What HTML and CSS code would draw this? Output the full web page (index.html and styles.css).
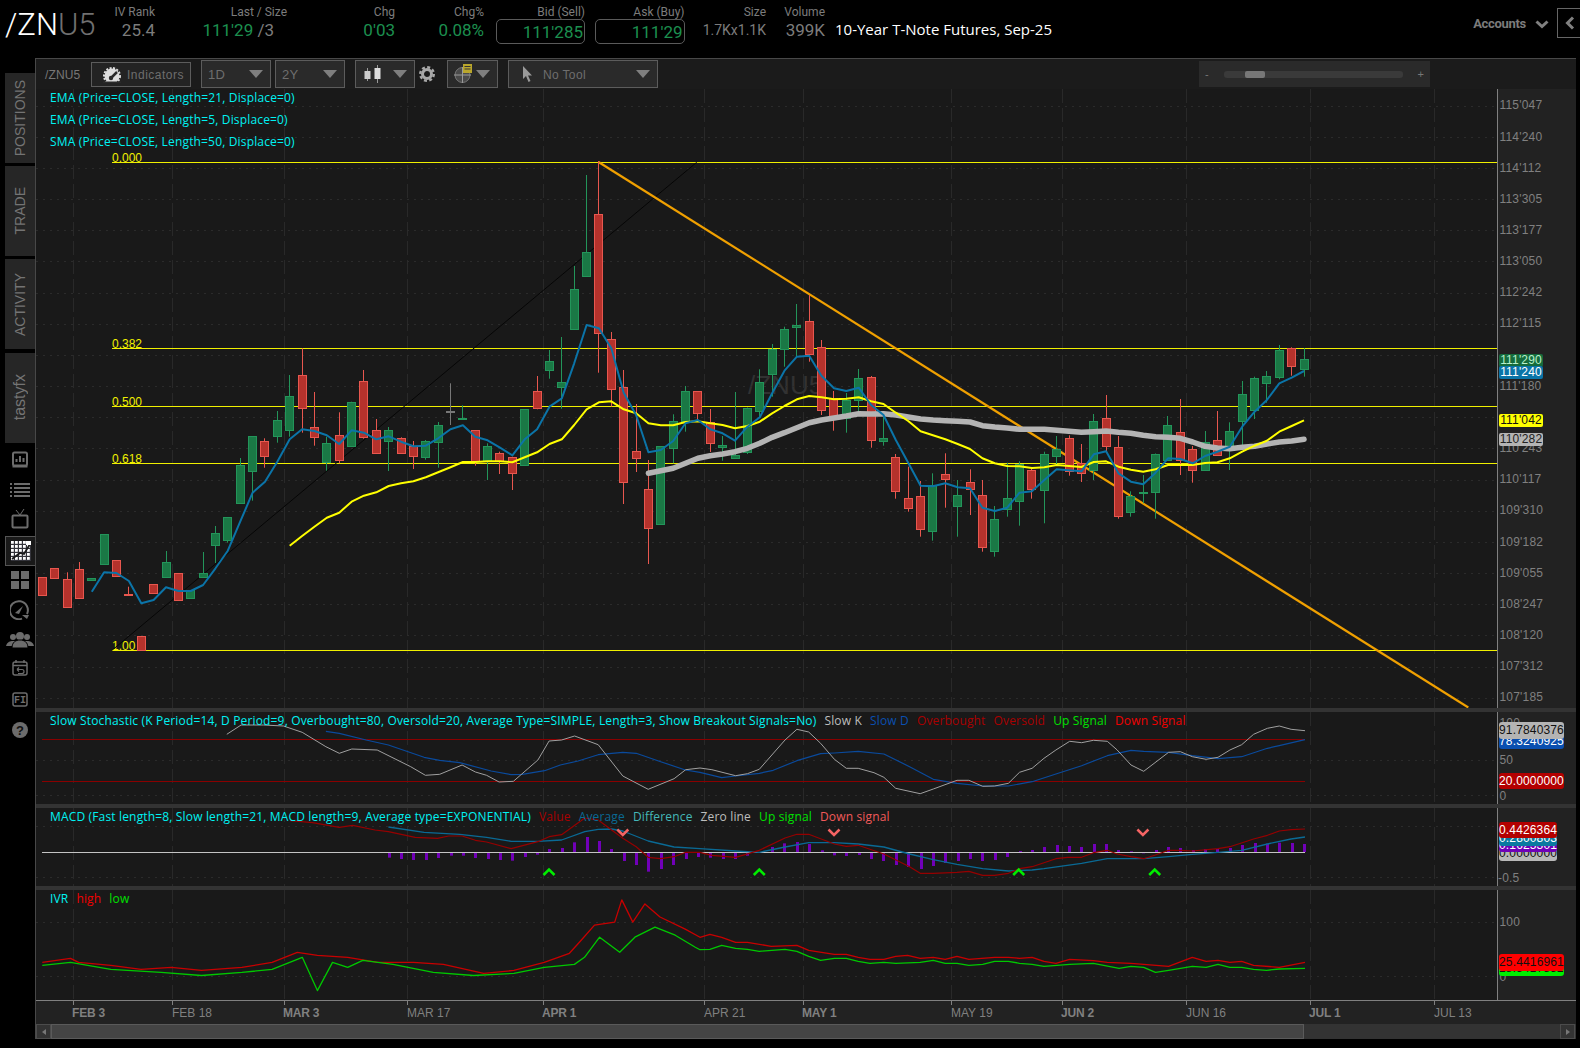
FILE: index.html
```html
<!DOCTYPE html>
<html lang="en">
<head>
<meta charset="utf-8">
<title>/ZNU5 chart</title>
<link rel="stylesheet" href="styles.css">
</head>
<body>
<div class="app">
  <header class="topbar">
    <div class="symbol">/ZN<span class="symbol-dim">U5</span></div>
    <div class="field f-iv"><div class="lbl">IV Rank</div><div class="val">25.4</div></div>
    <div class="field f-last"><div class="lbl">Last / Size</div><div class="val val-inset"><span class="up">111'29</span> /3</div></div>
    <div class="field f-chg"><div class="lbl">Chg</div><div class="val up">0'03</div></div>
    <div class="field f-pct"><div class="lbl">Chg%</div><div class="val up">0.08%</div></div>
    <div class="field f-bid"><div class="lbl">Bid (Sell)</div><div class="val up boxed">111'285</div></div>
    <div class="field f-ask"><div class="lbl">Ask (Buy)</div><div class="val up boxed">111'29</div></div>
    <div class="field f-size"><div class="lbl">Size</div><div class="val small">1.7Kx1.1K</div></div>
    <div class="field f-vol"><div class="lbl">Volume</div><div class="val">399K</div></div>
    <div class="title">10-Year T-Note Futures, Sep-25</div>
    <div class="accounts">Accounts
      <svg class="acc-chev" width="14" height="9" viewBox="0 0 14 9"><path d="M1.5 1.5 7 6.5l5.5-5" fill="none" stroke="#808080" stroke-width="3"/></svg>
    </div>
    <button class="collapse" type="button" aria-label="Collapse">
      <svg width="10" height="14" viewBox="0 0 10 14"><path d="M8 1.5 2.5 7 8 12.5" fill="none" stroke="#808080" stroke-width="3"/></svg>
    </button>
  </header>

  <div class="main">
    <aside class="sidebar">
      <div class="tabs">
        <div class="tab"><span>POSITIONS</span></div>
        <div class="tab"><span>TRADE</span></div>
        <div class="tab"><span>ACTIVITY</span></div>
        <div class="tab tab-tasty"><span>tastyfx</span></div>
      </div>
      <nav class="tools">
        <div class="tool"><svg width="18" height="18" viewBox="0 0 18 18"><rect x="2" y="1.5" width="14" height="13" rx="1.5" fill="none" stroke="#6c6c6c" stroke-width="2"/><path d="M1.5 15.5h15" stroke="#6c6c6c" stroke-width="2"/><path d="M5.5 11V8M9 11V5M12.5 11V7" stroke="#6c6c6c" stroke-width="2"/></svg></div>
        <div class="tool"><svg width="20" height="16" viewBox="0 0 20 16"><path d="M0 2h2M4 2h16M0 6h2M4 6h16M0 10h2M4 10h16M0 14h2M4 14h16" stroke="#6c6c6c" stroke-width="2"/></svg></div>
        <div class="tool tool-tv"><svg width="18" height="20" viewBox="0 0 18 20"><rect x="1.5" y="6.5" width="15" height="12" rx="1" fill="none" stroke="#6c6c6c" stroke-width="2"/><path d="M5 1l4 5 4-6" fill="none" stroke="#6c6c6c"/></svg></div>
        <div class="tool tool-on"><svg width="20" height="20" viewBox="0 0 20 20"><defs><pattern id="cell" width="4" height="4" patternUnits="userSpaceOnUse"><rect width="4" height="4" fill="#fff"/><rect x="2.800" y="0" width="1.200" height="4" fill="#33333a"/><rect x="0" y="2.800" width="4" height="1.200" fill="#33333a"/></pattern></defs><rect width="20" height="20" fill="url(#cell)"/><path d="M1 18 9 12l4 1 6-10" fill="none" stroke="#1a1a1a" stroke-width="1.800"/><rect x="15" y="0" width="5" height="4" fill="#fff"/></svg></div>
        <div class="tool"><svg width="18" height="18" viewBox="0 0 18 18"><path d="M0 0h8v8H0zM10 0h8v8h-8zM0 10h8v8H0zM10 10h8v8h-8z" fill="#6c6c6c"/></svg></div>
        <div class="tool"><svg width="20" height="20" viewBox="0 0 20 20"><path d="M17 14A9 9 0 1 0 12 18.6" fill="none" stroke="#6c6c6c" stroke-width="2"/><path d="M5 13 13 6l-4 8z" fill="#6c6c6c"/><path d="M12 15h7l-2 4z" fill="#6c6c6c"/></svg></div>
        <div class="tool"><svg width="28" height="17" viewBox="0 0 28 17"><g fill="#6c6c6c"><circle cx="7" cy="6" r="3"/><path d="M0 15c1-4 4-5 7-5s5 2 5 5z"/><circle cx="21" cy="6" r="3"/><path d="M28 15c-1-4-4-5-7-5s-5 2-5 5z"/><circle cx="14" cy="5" r="4"/><path d="M6 17c0-6 4-8 8-8s8 2 8 8z" stroke="#000"/></g></svg></div>
        <div class="tool tool-cal"><svg width="16" height="16" viewBox="0 0 16 16"><rect x="1" y="2" width="14" height="13" rx="2" fill="none" stroke="#6c6c6c" stroke-width="1.5"/><path d="M1 5.5h14M4 0v3M12 0v3" stroke="#6c6c6c" stroke-width="1.5"/><path d="M5 9.5h5a2 2 0 0 1 0 4H6M5 9.5l2-2M5 9.5l2 2" fill="none" stroke="#6c6c6c" stroke-width="1.2"/></svg></div>
        <div class="tool"><svg width="16" height="15" viewBox="0 0 16 15"><rect x="1" y="1" width="14" height="13" rx="2" fill="none" stroke="#6c6c6c" stroke-width="1.5"/><text x="8" y="11" class="fi">FI</text></svg></div>
        <div class="tool"><svg width="16" height="16" viewBox="0 0 16 16"><circle cx="8" cy="8" r="8" fill="#6c6c6c"/><text x="8" y="12.5" class="qm">?</text></svg></div>
      </nav>
    </aside>

    <section class="panel">
      <div class="toolbar">
        <span class="tb-symbol">/ZNU5</span>
        <button class="btn btn-ind" type="button">
          <svg width="18" height="16" viewBox="0 0 18 16"><circle cx="9" cy="9" r="7.5" fill="#ddd"/><circle cx="9" cy="9" r="8" fill="none" stroke="#ddd" stroke-width="2" stroke-dasharray="2 1.5"/><path d="M0 14.5h18V17H0z" fill="#2a2a2a"/><path d="M8 11 14 5" stroke="#2a2a2a" stroke-width="2.5"/><circle cx="8" cy="11" r="2.2" fill="#2a2a2a"/></svg>
          <span>Indicators</span>
        </button>
        <button class="btn btn-1d" type="button"><span>1D</span><i class="tri"></i></button>
        <button class="btn btn-2y" type="button"><span>2Y</span><i class="tri"></i></button>
        <button class="btn btn-style" type="button">
          <svg width="20" height="18" viewBox="0 0 20 18"><path d="M4.5 3v13M14.500 0v18" stroke="#999"/><rect x="1.500" y="6" width="6" height="8" fill="#ccc"/><rect x="11.500" y="3" width="6" height="11" fill="#ddd"/></svg>
          <i class="tri"></i>
        </button>
        <svg class="gear" width="16" height="16" viewBox="0 0 16 16"><circle cx="8" cy="8" r="4.500" fill="none" stroke="#a8a8a8" stroke-width="3"/><circle cx="8" cy="8" r="6.800" fill="none" stroke="#a8a8a8" stroke-width="2.400" stroke-dasharray="3 2.340"/></svg>
        <button class="btn btn-draw" type="button">
          <svg width="19" height="20" viewBox="0 0 19 20"><circle cx="8.500" cy="11" r="7.500" fill="#4a4a4a" stroke="#777"/><path d="M0 11h17M8.500 3v16" stroke="#999"/><rect x="9" y="0" width="9" height="9" fill="#b9a62c"/><path d="M10.500 2.500h6M10.500 5h6" stroke="#333"/></svg>
          <i class="tri"></i>
        </button>
        <button class="btn btn-tool" type="button">
          <svg width="11" height="16" viewBox="0 0 11 16"><path d="M1 0v13l3-3 2.500 6 2-1-2.500-5.500H10z" fill="#999"/></svg>
          <span>No Tool</span><i class="tri"></i>
        </button>
        <div class="zoombar">
          <span class="z-minus">-</span>
          <div class="z-track"><div class="z-thumb"></div></div>
          <span class="z-plus">+</span>
        </div>
      </div>

      <div class="pane pane-main">
        <div class="plot">
          <div class="watermark">/ZNU5</div>
          <svg id="s-main" class="chart"></svg>
          <div class="legend-stack">
            <div class="legend">EMA (Price=CLOSE, Length=21, Displace=0)</div>
            <div class="legend">EMA (Price=CLOSE, Length=5, Displace=0)</div>
            <div class="legend">SMA (Price=CLOSE, Length=50, Displace=0)</div>
          </div>
        </div>
        <div class="axis">
          <div class="ticks">
            <div class="tick">115'047</div><div class="tick">114'240</div><div class="tick">114'112</div><div class="tick">113'305</div>
            <div class="tick">113'177</div><div class="tick">113'050</div><div class="tick">112'242</div><div class="tick">112'115</div>
            <div class="tick"></div><div class="tick">111'180</div><div class="tick"></div><div class="tick">110'243</div>
            <div class="tick">110'117</div><div class="tick">109'310</div><div class="tick">109'182</div><div class="tick">109'055</div>
            <div class="tick">108'247</div><div class="tick">108'120</div><div class="tick">107'312</div><div class="tick">107'185</div>
          </div>
          <span class="tag t-last">111'290</span>
          <span class="tag t-ema5">111'240</span>
          <span class="tag t-ema21">111'042</span>
          <span class="tag t-sma">110'282</span>
        </div>
      </div>
      <div class="sep"></div>

      <div class="pane pane-stoch">
        <div class="plot">
          <svg id="s-stoch" class="chart"></svg>
          <div class="legend legend-row">
            <span>Slow Stochastic (K Period=14, D Period=9, Overbought=80, Oversold=20, Average Type=SIMPLE, Length=3, Show Breakout Signals=No)</span>
            <span class="c-k">Slow K</span><span class="c-d">Slow D</span><span class="c-ob">Overbought</span><span class="c-ob">Oversold</span><span class="c-up">Up Signal</span><span class="c-dn">Down Signal</span>
          </div>
        </div>
        <div class="axis">
          <span class="mini m-s100">100</span><span class="mini m-s50">50</span><span class="mini m-s0">0</span>
          <span class="tag wide t-d">78.3240925</span>
          <span class="tag wide t-k">91.7840376</span>
          <span class="tag wide t-os">20.0000000</span>
        </div>
      </div>
      <div class="sep"></div>

      <div class="pane pane-macd">
        <div class="plot">
          <svg id="s-macd" class="chart"></svg>
          <div class="legend legend-row">
            <span>MACD (Fast length=8, Slow length=21, MACD length=9, Average type=EXPONENTIAL)</span>
            <span class="c-ob">Value</span><span class="c-avg">Average</span><span class="c-diff">Difference</span><span class="c-k">Zero line</span><span class="c-up">Up signal</span><span class="c-pink">Down signal</span>
          </div>
        </div>
        <div class="axis">
          <span class="mini m-mn">-0.5</span>
          <span class="tag t-zero">0.0000000</span>
          <span class="tag t-diff">0.1625301</span>
          <span class="tag t-avg">0.2800803</span>
          <span class="tag t-val">0.4426364</span>
        </div>
      </div>
      <div class="sep"></div>

      <div class="pane pane-ivr">
        <div class="plot">
          <svg id="s-ivr" class="chart"></svg>
          <div class="legend legend-row">
            <span>IVR</span><span class="c-dn">high</span><span class="c-up">low</span>
          </div>
        </div>
        <div class="axis">
          <span class="mini m-i100">100</span><span class="mini m-i0">0</span>
          <span class="tag wide t-low">18.5417852</span>
          <span class="tag wide t-high">25.4416961</span>
        </div>
      </div>

      <div class="timeaxis" id="timeaxis"></div>
      <div class="scrollbar">
        <div class="sb-btn"><i class="sb-left"></i></div>
        <div class="sb-thumb"></div>
        <div class="sb-btn sb-end"><i class="sb-right"></i></div>
      </div>
    </section>
  </div>
</div>
<script src="script.js"></script>
</body>
</html>
```

FILE: styles.css
```css
* { box-sizing: border-box; }
html, body { margin: 0; padding: 0; background: #000; }
body { font-family: "Liberation Sans", Arial, sans-serif; overflow: hidden; }
.app { width: 1580px; height: 1048px; overflow: hidden; }

/* top bar */
.topbar { height: 58px; display: flex; align-items: flex-start; font-family: Roboto, sans-serif; color: #7a7a7a; }
.symbol { margin: 9px 0 0 5px; width: 90px; font-size: 31px; line-height: 32px; font-weight: 300; color: #fff; white-space: nowrap; }
.symbol-dim { color: #707070; }
.field { text-align: right; padding-top: 5px; flex: none; }
.lbl { font-size: 12px; line-height: 14px; color: #7c7c7c; white-space: nowrap; }
.val { font-size: 17px; line-height: 22px; color: #7c7c7c; white-space: nowrap; font-weight: 400; }
.val.small { font-size: 14px; }
.val-inset { padding-right: 13px; }
.up { color: #1c8f4f; }
.boxed { border: 1px solid #5a5a5a; border-radius: 5px; height: 25px; line-height: 24px; padding-right: 1px; margin-left: auto; width: 89.500px; }
.f-iv { width: 60px; }
.f-last { width: 132px; }
.f-chg { width: 108px; }
.f-pct { width: 89px; }
.f-bid { width: 101px; }
.f-ask { width: 99.500px; }
.f-size { width: 81.500px; }
.f-vol { width: 59px; }
.title { margin: 18px 0 0 10px; font: 15px/22px "Open Sans", sans-serif; color: #fff; white-space: nowrap; }
.accounts { margin: 15px 0 0 auto; display: flex; align-items: center; font-size: 13px; line-height: 18px; font-weight: 700; letter-spacing: -.3px; color: #7c7c7c; }
.acc-chev { margin-left: 9px; }
.collapse { margin: 8px 0 0 8px; width: 23px; height: 30px; padding: 0 0 0 7px; background: #000; border: 1px solid #666; border-right: 0; display: flex; align-items: center; }

/* layout */
.main { display: flex; height: 981px; }
.sidebar { width: 35px; flex: none; }
.panel { width: 1541px; flex: none; position: relative; border-top: 1px solid #484848; border-left: 1px solid #484848; background: #191919; }

/* left rail */
.tabs { display: flex; flex-direction: column; gap: 3.300px; padding: 14.700px 0 0 5px; }
.tab { height: 90px; background: #262626; display: flex; align-items: center; justify-content: center; }
.tab span { writing-mode: vertical-rl; transform: rotate(180deg); font-size: 14px; color: #747474; white-space: nowrap; }
.tab-tasty span { font-size: 16px; }
.tools { padding-top: 2px; }
.tool { height: 30px; display: flex; align-items: center; justify-content: center; padding-left: 5px; margin-left: 0; }
.tool svg { display: block; }
.tool-tv svg { margin-top: -2px; }
.tool-cal svg { margin-top: -4px; }
.tool-on { margin-left: 5px; padding-left: 0; background: #191919; border: 1px solid #555; border-right: 0; margin-top: 1px; margin-bottom: -1px; }
.fi { font: 700 10px "Liberation Mono", monospace; fill: #6c6c6c; text-anchor: middle; }
.qm { font: 700 13px "Liberation Sans", sans-serif; fill: #111; text-anchor: middle; }

/* toolbar over the chart */
.toolbar { position: absolute; left: 0; right: 0; top: 0; height: 30px; z-index: 5; background: #1b1b1b; padding: 1px 0 0 9px; display: flex; align-items: flex-start; }
.tb-symbol { width: 46px; padding-top: 1px; height: 28px; line-height: 28px; font-size: 12px; color: #777; letter-spacing: .15px; }
.btn { height: 28px; padding: 0; background: #2a2a2a; border: 1px solid #5c5c5c; font: 12px "Liberation Sans", sans-serif; color: #6e6e6e; display: flex; align-items: center; flex: none; letter-spacing: .35px; }
.btn span { padding-top: 1px; }
.btn-ind { width: 100px; height: 25px; margin: 2px 0 0 0; padding-left: 11px; gap: 6px; letter-spacing: .5px; background: #232323; }
.btn-1d { width: 70px; margin-left: 10px; padding: 0 7px 0 6px; justify-content: space-between; font-size: 13px; }
.btn-2y { width: 70px; margin-left: 4px; padding: 0 7px 0 6px; justify-content: space-between; font-size: 13px; }
.btn-style { width: 60px; margin-left: 10px; padding: 0 7px 0 7px; justify-content: space-between; }
.gear { margin: 6px 0 0 4px; flex: none; }
.btn-draw { width: 51px; margin-left: 12px; padding: 0 7px 0 6px; justify-content: space-between; }
.btn-tool { width: 150px; margin-left: 10px; padding: 0 7px 0 13px; }
.btn-tool span { margin-left: 10px; flex: 1; text-align: left; }
.tri { display: block; width: 0; height: 0; border-left: 7.500px solid transparent; border-right: 7.500px solid transparent; border-top: 8px solid #7f7f7f; }
.zoombar { position: absolute; left: 1163px; top: 2px; width: 231px; height: 26px; background: #2a2a2a; display: flex; align-items: center; justify-content: space-between; padding: 0 6px; font-size: 11px; color: #777; }
.z-track { width: 179.500px; height: 7px; border-radius: 3px; background: #3a3a3a; margin-left: 1px; }
.z-thumb { width: 20px; height: 7px; margin-left: 21px; border-radius: 2px; background: #777; }

/* panes */
.pane { display: flex; position: relative; }
.pane-main { height: 649px; }
.pane-stoch { height: 92px; }
.pane-macd { height: 78px; }
.pane-ivr { height: 110px; }
.sep { height: 4px; background: #333; }
.plot { width: 1461px; position: relative; flex: none; overflow: hidden; }
.chart { display: block; width: 100%; height: 100%; position: relative; }
.watermark { position: absolute; left: 712px; top: 311px; font-size: 26px; line-height: 30px; color: #323232; }
.legend { font: 12px/22px "Open Sans", sans-serif; letter-spacing: .16px; color: #00f2f2; white-space: nowrap; }
.legend-stack { position: absolute; left: 14px; top: 28px; }
.legend-row { position: absolute; left: 14px; top: -2px; display: flex; gap: 8px; }
.c-k { color: #bdbdbd; }
.c-d { color: #0a4fb0; }
.c-ob { color: #a80000; }
.c-up { color: #00e000; }
.c-dn { color: #f00000; }
.c-avg { color: #0a6a95; }
.c-diff { color: #44b8b8; }
.c-pink { color: #f25a5a; }
.axis { width: 79px; flex: none; position: relative; overflow: hidden; background: #222; border-left: 1px solid #808080; color: #808080; font-size: 12px; letter-spacing: .2px; }
.ticks { padding-top: 31.400px; }
.tick { height: 31.170px; line-height: 31.170px; padding-left: 1.500px; }
.mini { position: absolute; left: 1.500px; line-height: 14px; }
.m-s100 { top: 4px; }
.m-s50 { top: 41px; }
.m-s0 { top: 77px; }
.m-mn { top: 63px; left: 0; }
.m-i100 { top: 25px; }
.m-i0 { top: 80px; }
.tag { position: absolute; left: 1px; width: 58px; height: 15px; line-height: 15px; border-radius: 3px; text-align: center; font-size: 12px; color: #fff; letter-spacing: .15px; }
.tag.wide { width: 65px; }
.t-last, .t-ema5, .t-ema21, .t-sma { width: 44px; height: 13px; line-height: 13px; border-radius: 2px; }
.t-last { top: 294.700px; background: #156b3c; color: #b8f0cc; }
.t-ema5 { top: 307px; background: #0a74a8; }
.t-ema21 { top: 355px; background: #ffff00; color: #111; }
.t-sma { top: 374px; background: #b4b4b4; color: #222; }
.t-k { top: 10px; height: 17px; line-height: 17px; background: #b4b4b4; color: #111; }
.t-d { top: 22px; background: #0a4fb0; }
.t-os { top: 61px; background: #b30000; height: 16px; line-height: 16px; }
.t-val { top: 14px; background: #b30000; height: 16px; line-height: 16px; }
.t-avg { top: 23px; background: #0a7aa0; }
.t-diff { top: 30px; background: #7000b8; height: 14px; }
.t-zero { top: 38px; background: #b8b8b8; color: #111; }
.t-high { top: 64px; background: #ff0000; color: #111; height: 17px; line-height: 17px; }
.t-low { top: 71px; background: #00ee00; color: #111; }

/* time axis + scrollbar */
.timeaxis { height: 24px; position: relative; background: #222; border-top: 1px solid #808080; color: #808080; font-size: 12px; }
.time-label { position: absolute; top: 5px; line-height: 14px; white-space: nowrap; }
.time-label.major { font-weight: 700; letter-spacing: -.2px; margin-left: -1px; }
.time-tick { position: absolute; top: 0; width: 1px; height: 4px; background: #808080; }
.scrollbar { height: 15px; background: #333; display: flex; }
.sb-btn { width: 15px; flex: none; background: #333; border: 1px solid #4c4c4c; display: flex; align-items: center; justify-content: center; }
.sb-end { margin-left: auto; margin-right: 1px; }
.sb-thumb { width: 1253px; flex: none; background: #444; border: 1px solid #5a5a5a; }
.sb-left { border-top: 3px solid transparent; border-bottom: 3px solid transparent; border-right: 4px solid #777; }
.sb-right { border-top: 3px solid transparent; border-bottom: 3px solid transparent; border-left: 4px solid #777; }
```

FILE: script.js
```js
(function () {
  var NS = 'http://www.w3.org/2000/svg';
  var X = function (i) { return 42.3 + 12.37 * i; };
  var snap = function (v) { return Math.round(v - 0.5) + 0.5; };

  function el(parent, name, attrs, text) {
    var n = document.createElementNS(NS, name);
    for (var k in attrs) n.setAttribute(k, attrs[k]);
    if (text) n.textContent = text;
    parent.appendChild(n);
    return n;
  }
  function setup(id, x, y, w, h) {
    var s = document.getElementById(id);
    s.setAttribute('viewBox', x + ' ' + y + ' ' + w + ' ' + h);
    return s;
  }
  function line(s, pts, color, width) {
    var d = pts.map(function (p) { return p[0].toFixed(1) + ',' + p[1].toFixed(1); }).join(' ');
    el(s, 'polyline', { points: d, fill: 'none', stroke: color, 'stroke-width': width, 'stroke-linejoin': 'round' });
  }
  function hline(s, y, a, b, color, dash) {
    var at = { x1: a, x2: b, y1: y, y2: y, stroke: color, 'stroke-width': 1 };
    if (dash) at['stroke-dasharray'] = dash;
    el(s, 'line', at);
  }
  function scale(list, ox, oy, sx, sy) {
    return list.map(function (p) { return [ox + p[0] / sx, oy + p[1] / sy]; });
  }
  function series(start, ys) {
    return ys.map(function (y, n) { return [X(start + n), y]; });
  }

  var GRID = [73.5, 172.5, 284.5, 407.5, 543.5, 704.5, 803.5, 951.5, 1062.5, 1186.5, 1310.5, 1434.5];
  function vgrid(s, top, bottom) {
    GRID.forEach(function (x) {
      el(s, 'line', { x1: x, x2: x, y1: top, y2: bottom, stroke: '#292929', 'stroke-width': 1, 'stroke-dasharray': '14 5' });
    });
  }

  /* ---------- price pane ---------- */
  var main = setup('s-main', 36, 59, 1461, 649);
  vgrid(main, 89, 708);
  for (var n = 0; n < 20; n++) {
    hline(main, snap(106 + 31.17 * n), 36, 1497, '#2b2b2b', '2 5');
  }
  [162.5, 348.5, 406.5, 463.5, 650.5].forEach(function (y) { hline(main, y, 112, 1497, '#f0f000'); });
  [['0.000', 162], ['0.382', 348], ['0.500', 406], ['0.618', 463], ['1.00', 650]].forEach(function (f) {
    el(main, 'text', { x: 112, y: f[1] - 0.5, fill: '#f0f000', 'font-size': 12, 'font-family': 'Liberation Sans, sans-serif' }, f[0]);
  });
  el(main, 'line', { x1: 112, y1: 650.3, x2: 696.7, y2: 162.3, stroke: '#060606', 'stroke-width': 1 });
  el(main, 'line', { x1: 598.5, y1: 162, x2: 1468.3, y2: 707.5, stroke: '#f0a000', 'stroke-width': 2.2 });

  /* [high, body top, body bottom, low, colour] r=red g=green k=grey */
  var C = [
    [577,577.3,595.7,596,'r'],[568,568.3,578.7,579,'r'],[572.3,579.3,607.7,608,'r'],[562,569.3,598.7,599,'r'],
    [578,578.3,580.7,581,'g'],[534,534.3,564.7,565,'g'],[560,560.7,576.7,577,'r'],[586.7,594.3,595.7,596,'r'],
    [636,636.3,650,650,'r'],[584,584.3,593.7,594,'r'],[551,562.3,577.7,578,'g'],[573,573.3,600.7,601,'r'],
    [590,590,598.7,599,'g'],[552,573.3,577.7,578,'g'],[526,533.3,545.7,563,'g'],[517,517.3,540.7,542.7,'g'],
    [458,465.3,503.3,504,'g'],[436,436.3,471.3,500.7,'g'],[438.3,441.7,456.7,467.7,'r'],[411,420.3,436.7,442.7,'g'],
    [375,396.3,430.7,436.7,'g'],[348.3,375.3,408.7,432.7,'r'],[392,427.3,437.7,445.7,'r'],[436.7,443.3,462.7,470.7,'g'],
    [412.3,435.3,460.7,463.3,'r'],[401.7,402.5,446.7,447,'g'],[370,381.3,437.7,438.7,'r'],[419,430.3,453.7,454,'r'],
    [427,430.3,441.7,471,'g'],[437.3,438.3,453.7,454,'r'],[441,446.7,456.7,469,'r'],[440,441.3,457.7,459.7,'g'],
    [422,425.3,442.7,467.7,'g'],[383.3,411,411.6,425,'k'],[405.3,418,419.3,419.5,'g'],[430,430.3,461,465.7,'r'],
    [443.3,446.3,461,480,'g'],[451.7,453.3,461.7,474,'r'],[456.7,457.7,473.3,490,'r'],[409,409.3,465.3,465.5,'g'],
    [376,391.3,408.7,409.3,'r'],[350,361.3,370.7,378.7,'g'],[337,382.3,387.3,408.7,'g'],[266,289.3,329.3,329.5,'g'],
    [175,252.3,276.3,276.5,'g'],[161,214.3,333.3,372.7,'r'],[332,339.3,389.3,406.7,'r'],[370,387.3,482.3,504,'r'],
    [404,451.3,458.7,472,'r'],[460,489.3,528.7,564,'r'],[446,446.3,524.7,525,'g'],[414.3,421.3,448.7,463.3,'g'],
    [386,391.3,421.7,431.7,'g'],[391,391.3,413.7,420,'r'],[409,422.3,443.7,452,'r'],[436,445.3,447.3,460.7,'g'],
    [392,455.7,458.7,459,'g'],[407.5,408.3,452,454,'g'],[369.3,382.3,411.7,418,'g'],[344,349.3,374.7,396.7,'g'],
    [326.7,329.3,349.3,366.7,'g'],[304,325.3,327.7,357.3,'g'],[295,321.3,354.3,361.7,'r'],[340,347.3,410.3,415,'r'],
    [391,398,417,430.7,'r'],[393,400,418.7,432.7,'g'],[369,378.3,400,413,'g'],[376,377.3,440.3,447.7,'r'],
    [413,438.3,441.3,445.7,'g'],[454,457.3,491.3,498.7,'r'],[466.7,498.3,508.7,511.7,'r'],[481,496.3,529.3,536.7,'r'],
    [473.3,485.7,531.3,540.7,'g'],[453.3,474.3,479.7,507.7,'r'],[480,495.3,506.7,536.7,'g'],[469.3,482.3,489.3,515,'r'],
    [480,495.3,547.3,551.7,'r'],[506,519.3,551.3,556.7,'g'],[462.7,498.3,509.3,516.7,'g'],[461.3,464,501.5,525.7,'g'],
    [467,470.3,489.3,498.7,'r'],[451.7,454.7,490.3,523.3,'g'],[436,449.3,456.7,464.7,'g'],[435.3,438.3,471,475.7,'r'],
    [444,463.3,473.3,482,'r'],[414,421.3,470.3,480,'g'],[395,418.3,446.7,451.7,'r'],[436,447.3,516.7,518.7,'r'],
    [491.3,496.3,512.7,516.7,'g'],[475,492,493.7,503.3,'g'],[453.5,454.3,492.7,518.7,'g'],[416,425.3,460.7,461,'g'],
    [399,432.3,460.7,475,'r'],[446,449.3,470.3,482.7,'r'],[431,442.3,470.3,470.5,'g'],[411,440.3,455,455.5,'r'],
    [422.3,431.3,448.3,470,'g'],[381,394.3,421.3,446.7,'g'],[376.7,378.3,410.3,419,'g'],[371,376.3,383.3,402.7,'g'],
    [345,350.3,377.7,379.3,'g'],[347.3,348.3,366.7,375.7,'r'],[348.3,359.3,369.7,376.7,'g']
  ];
  var PAL = {
    r: { fill: '#b5322c', edge: '#e8574f' },
    g: { fill: '#1a7845', edge: '#23955a' },
    k: { fill: '#777', edge: '#777' }
  };
  C.forEach(function (c, i) {
    var x = snap(X(i)), p = PAL[c[4]];
    var top = snap(c[1]), bot = snap(c[2]);
    el(main, 'line', { x1: x, x2: x, y1: c[0], y2: c[3], stroke: p.edge, 'stroke-width': 1 });
    if (bot - top < 2) bot = top + 1;
    el(main, 'rect', { x: x - 4, y: top, width: 8, height: bot - top, fill: p.fill, stroke: p.edge, 'stroke-width': 1 });
  });

  var sma = [473.3,470.7,468.3,463.3,458.3,455.7,454,451.7,448.3,443.3,437.3,432.7,427.7,422.7,420,418,416,413.7,414,413.7,415,417,419,420,420.7,421.3,422,425.7,427,428,429.3,429.3,429.3,430.3,431.3,432.3,431.7,431,432.3,433.3,435.3,436.7,437.3,438.3,442,446.3,448,448.7,447.3,446.3,444,442,441,439.3];
  var ema21 = [545.7,536,526.7,517.7,512.7,501.7,495.7,492.3,486,483.3,481.3,477.3,472.3,467.3,462,462,461.3,461.3,462.3,457.3,452.3,444,439.3,425,409.3,402.3,401.3,409.3,413.3,423.3,425.3,425.3,422,421.3,423.3,425,428.3,426,421.7,413.3,406,399.3,396,397.3,399.3,398.7,397.3,401.3,404,412.7,421,431.3,435.3,439.3,444,449,458.3,463.3,466,466.3,468,467.3,465,466,467,462,461.3,466.7,469.7,471.7,469.3,465,465,465,463,462.3,458.3,451.7,445.7,440.7,431.7,426,420.3];
  var ema5 = [591.7,572.3,573,581,603.3,600,587.3,591,591,585,568.3,550.7,521.7,492.7,481.7,461.7,439.3,429.3,431,435.3,444,430.3,432.7,439.3,436.3,441.7,446.3,445.7,438.3,429.3,425.3,436.7,440.3,447.7,455.3,439.3,429.3,406.7,398.3,363.3,325,328.3,348.3,392.7,415,452.3,450,441,423.3,420,429.3,433.3,440.7,426.7,417.3,393.3,370.7,356.7,355.7,376,388.3,391,387.7,405,415,440,462.7,485.7,486.3,483.3,487.3,488.3,507.7,511,507.7,492.7,491.3,480,469.3,470.3,471.3,454.3,451.3,473.3,481.7,484.3,472.7,458.3,459,463.3,456,451.7,446.7,426.7,411.7,400,383.3,377.7,371];
  el(main, 'polyline', { points: series(49, sma).map(function (p) { return p.join(','); }).join(' '), fill: 'none', stroke: '#b4b4b4', 'stroke-width': 5.5, 'stroke-linecap': 'round', 'stroke-linejoin': 'round' });
  line(main, series(20, ema21), '#ffff00', 2);
  line(main, series(4, ema5), '#0b74a8', 2);

  /* ---------- stochastic ---------- */
  var st = setup('s-stoch', 36, 712, 1461, 92);
  vgrid(st, 712, 804);
  hline(st, 760.5, 36, 1497, '#2b2b2b', '2 5');
  hline(st, 795.5, 36, 1497, '#2b2b2b', '2 5');
  hline(st, 739.5, 42, 1305, '#8a0000');
  hline(st, 781.5, 42, 1305, '#8a0000');
  var kA = [[508,103],[540,75],[590,75],[635,78],[677,97],[730,140],[760,160],[788,147],[845,150],[920,200],[953,226],[985,223],[1035,195],[1065,216],[1090,226],[1118,246],[1150,244],[1205,180],[1230,123],[1258,120],[1287,108],[1340,134],[1395,228],[1452,268],[1510,236],[1536,209],[1568,204]];
  var kB = [[30,209],[90,227],[120,221],[150,208],[215,120],[245,88],[275,96],[305,130],[340,178],[370,205],[400,205],[440,218],[465,232],[495,265],[557,281],[590,267],[650,241],[680,241],[715,259],[745,258],[780,250],[808,217],[840,205],[870,175],[900,150],[935,124],[965,128],[995,121],[1030,124],[1055,150],[1090,195],[1122,214],[1185,157],[1215,155],[1245,170],[1280,178],[1310,172],[1340,150],[1370,134],[1400,103],[1435,85],[1465,78],[1495,88],[1530,92]];
  var dA = [[730,94],[760,100],[820,120],[870,135],[950,172],[985,181],[1030,188],[1100,213],[1145,224],[1170,223],[1220,212],[1255,195],[1295,183],[1340,164],[1395,157],[1425,160],[1480,185],[1535,210],[1568,217]];
  var dB = [[55,233],[90,228],[150,220],[185,211],[245,182],[305,161],[340,159],[400,154],[465,162],[530,200],[590,238],[650,250],[715,258],[780,258],[840,245],[900,222],[965,197],[1030,167],[1090,151],[1122,154],[1185,157],[1245,167],[1310,176],[1370,170],[1435,145],[1465,137],[1530,119]];
  line(st, scale(dA, 0, 700, 2.24, 3).concat(scale(dB, 700, 700, 2.529, 3)), '#0a4a9c', 1.2);
  line(st, scale(kA, 0, 700, 2.24, 3).concat(scale(kB, 700, 700, 2.529, 3)), '#a0a0a0', 1);

  /* ---------- MACD ---------- */
  var ma = setup('s-macd', 36, 808, 1461, 78);
  vgrid(ma, 808, 886);
  hline(ma, 826.5, 36, 1497, '#2b2b2b', '2 5');
  hline(ma, 877.5, 36, 1497, '#2b2b2b', '2 5');
  var hist = [473,477,480,480,474,467,467,474,477,480,482,471,464,447,444,427,411,423,447,483,495,515,507,495,477,471,
              473,477,477,467,459,441,430,426,432,451,466,468,465,477,483,495,501,507,498,489,483,477,483,480,471,453,450,441,435,438,441,432,432,450,454,460,450,441,444,450,447,447,444,435,429,431,428,429,432];
  hist.forEach(function (z, n) {
    var y = 700 + z / 3, x = Math.round(X(28 + n)) - 1;
    el(ma, 'rect', { x: x, y: Math.min(y, 852), width: 3, height: Math.abs(y - 852), fill: '#7100b8' });
  });
  hline(ma, 852.5, 42, 1305, '#c4c4c4');
  var vA = [[650,362],[700,368],[760,382],[790,376],[840,390],[870,395],[930,412],[980,415],[1005,408],[1035,408],[1065,421],[1090,426],[1145,446],[1205,425],[1230,410],[1258,404],[1310,354],[1340,360],[1395,415],[1425,440],[1452,472],[1480,476],[1510,470],[1536,457],[1568,457]];
  var vB = [[30,466],[90,472],[150,451],[215,414],[245,403],[275,403],[340,432],[370,439],[400,436],[465,462],[530,500],[557,520],[590,520],[650,517],[680,514],[715,526],[745,526],[780,520],[808,506],[840,500],[900,476],[930,472],[965,472],[995,458],[1030,451],[1055,462],[1090,470],[1122,476],[1150,466],[1185,451],[1215,451],[1245,453],[1310,446],[1340,440],[1400,417],[1435,406],[1465,393],[1495,389],[1530,387]];
  var aA = [[870,381],[950,397],[1030,403],[1090,412],[1145,424],[1205,424],[1258,420],[1310,395],[1340,388],[1370,387],[1395,393],[1452,423],[1510,441],[1568,446]];
  var aB = [[90,453],[150,457],[215,441],[275,428],[340,428],[400,432],[465,441],[530,462],[590,479],[650,493],[715,506],[780,513],[840,510],[870,506],[965,490],[1030,476],[1090,476],[1122,476],[1185,470],[1245,463],[1310,457],[1370,451],[1435,432],[1495,417],[1530,411]];
  line(ma, scale(aA, 0, 700, 2.24, 3).concat(scale(aB, 700, 700, 2.529, 3)), '#0a6a95', 1.3);
  line(ma, scale(vA, 0, 700, 2.24, 3).concat(scale(vB, 700, 700, 2.529, 3)), '#960000', 1.2);
  [549, 759.3, 1018.7, 1154.7].forEach(function (x) {
    el(ma, 'path', { d: 'M' + (x - 5.5) + ' 875 L' + x + ' 869.500 L' + (x + 5.5) + ' 875', fill: 'none', stroke: '#00ee00', 'stroke-width': 2.5 });
  });
  [622.8, 834, 1142.9].forEach(function (x) {
    el(ma, 'path', { d: 'M' + (x - 5.5) + ' 829.500 L' + x + ' 835 L' + (x + 5.5) + ' 829.500', fill: 'none', stroke: '#f56464', 'stroke-width': 2.5 });
  });

  /* ---------- IVR ---------- */
  var iv = setup('s-ivr', 36, 890, 1461, 110);
  vgrid(iv, 890, 1000);
  hline(iv, 922.5, 36, 1497, '#2b2b2b', '2 5');
  hline(iv, 976.5, 36, 1497, '#2b2b2b', '2 5');
  var S = 0.99235;
  var hA = [[42,955],[70,951],[78,955],[110,958],[140,962],[170,960],[200,963],[240,960],[270,955],[295,945],[315,948],[345,950],[375,955],[410,955],[440,957],[480,966],[510,963],[540,955],[565,946],[575,935],[590,918],[610,915],[617,893],[628,915],[640,897],[655,910],[680,922]];
  var hB = [[0,712],[25,703],[55,712],[90,727],[120,727],[180,739],[245,736],[275,751],[340,763],[370,763],[400,772],[430,778],[465,778],[495,769],[525,766],[557,775],[590,772],[620,778],[650,769],[680,778],[745,772],[780,772],[808,775],[840,772],[870,784],[900,790],[935,778],[995,782],[1030,787],[1090,790],[1122,793],[1185,799],[1245,772],[1280,784],[1310,781],[1340,787],[1370,784],[1400,796],[1465,802],[1530,787]];
  var lA = [[42,958],[70,955],[110,962],[160,965],[200,968],[240,965],[270,962],[300,950],[315,983],[330,955],[345,960],[360,953],[390,957],[430,965],[470,968],[510,966],[540,960],[570,957],[580,950],[595,930],[615,945],[630,930],[650,920],[670,928],[690,940]];
  var lB = [[0,749],[25,748],[55,736],[90,745],[120,748],[150,754],[215,748],[245,754],[275,769],[305,781],[340,775],[370,775],[400,784],[430,790],[465,787],[495,790],[557,787],[590,781],[620,790],[650,790],[680,796],[715,793],[745,784],[780,784],[808,790],[840,793],[870,799],[935,793],[995,790],[1060,805],[1090,799],[1122,802],[1152,817],[1185,811],[1245,799],[1280,802],[1310,793],[1340,802],[1370,802],[1400,808],[1433,811],[1465,807],[1530,805]];
  line(iv, scale(hA, 0, 0, S, S).concat(scale(hB, 700, 700, 2.529, 3)), '#c80000', 1.3);
  line(iv, scale(lA, 0, 0, S, S).concat(scale(lB, 700, 700, 2.529, 3)), '#00c800', 1.3);

  /* ---------- time axis ---------- */
  var T = [['FEB 3',73,1],['FEB 18',172,0],['MAR 3',284,1],['MAR 17',407,0],['APR 1',543,1],['APR 21',704,0],['MAY 1',803,1],['MAY 19',951,0],['JUN 2',1062,1],['JUN 16',1186,0],['JUL 1',1310,1],['JUL 13',1434,0]];
  var axis = document.getElementById('timeaxis');
  T.forEach(function (t) {
    var tick = document.createElement('i');
    tick.className = 'time-tick';
    tick.style.left = (t[1] - 36) + 'px';
    axis.appendChild(tick);
    var lab = document.createElement('span');
    lab.className = 'time-label' + (t[2] ? ' major' : '');
    lab.style.left = (t[1] - 36) + 'px';
    lab.textContent = t[0];
    axis.appendChild(lab);
  });
})();
```
